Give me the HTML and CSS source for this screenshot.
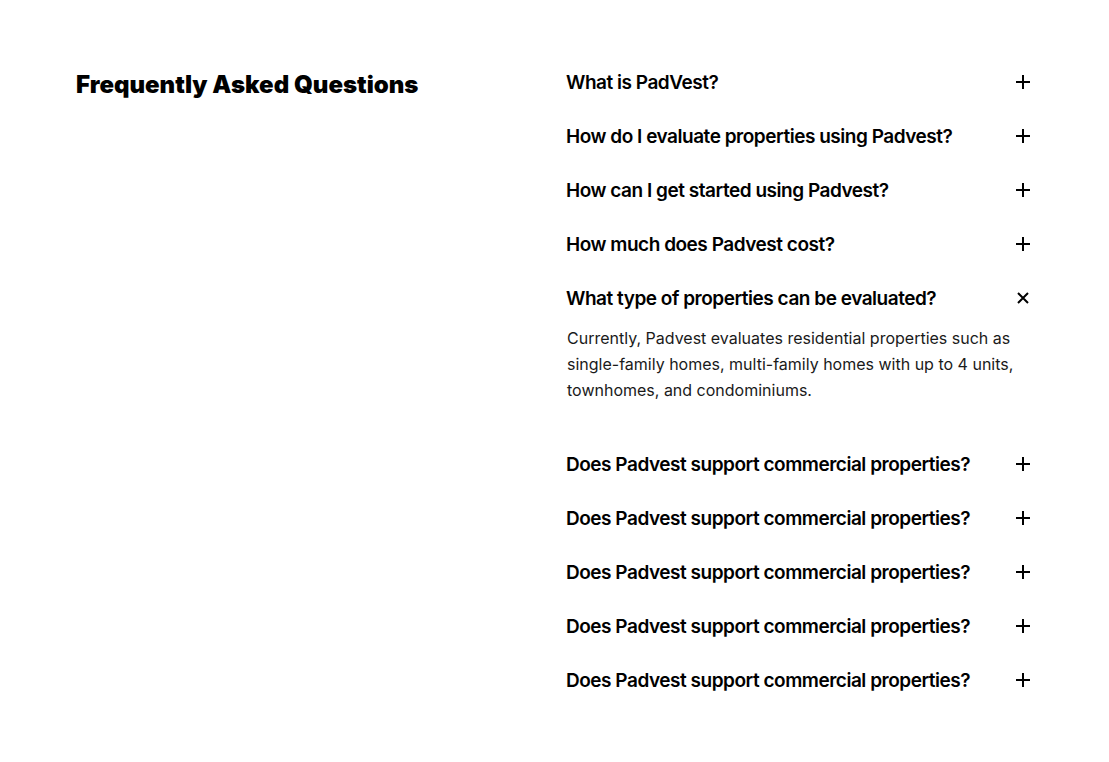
FILE: index.html
```html
<!DOCTYPE html>
<html lang="en">
<head>
<meta charset="utf-8">
<title>FAQ</title>
<link rel="stylesheet" href="styles.css">
</head>
<body>
<main class="faq">
  <h2 class="faq-title">Frequently Asked Questions</h2>
  <div class="faq-list">
    <div class="faq-item">
      <div class="faq-q"><span>What is PadVest?</span><svg class="icon" viewBox="0 0 16 16"><path d="M8 1v14M1 8h14"/></svg></div>
    </div>
    <div class="faq-item">
      <div class="faq-q"><span>How do I evaluate properties using Padvest?</span><svg class="icon" viewBox="0 0 16 16"><path d="M8 1v14M1 8h14"/></svg></div>
    </div>
    <div class="faq-item">
      <div class="faq-q"><span>How can I get started using Padvest?</span><svg class="icon" viewBox="0 0 16 16"><path d="M8 1v14M1 8h14"/></svg></div>
    </div>
    <div class="faq-item">
      <div class="faq-q"><span>How much does Padvest cost?</span><svg class="icon" viewBox="0 0 16 16"><path d="M8 1v14M1 8h14"/></svg></div>
    </div>
    <div class="faq-item open">
      <div class="faq-q"><span>What type of properties can be evaluated?</span><svg class="icon" viewBox="0 0 16 16"><path d="M3 3l10 10M13 3L3 13"/></svg></div>
      <p class="faq-a">Currently, Padvest evaluates residential properties such as single-family homes, multi-family homes with up to 4 units, townhomes, and condominiums.</p>
    </div>
    <div class="faq-item">
      <div class="faq-q"><span>Does Padvest support commercial properties?</span><svg class="icon" viewBox="0 0 16 16"><path d="M8 1v14M1 8h14"/></svg></div>
    </div>
    <div class="faq-item">
      <div class="faq-q"><span>Does Padvest support commercial properties?</span><svg class="icon" viewBox="0 0 16 16"><path d="M8 1v14M1 8h14"/></svg></div>
    </div>
    <div class="faq-item">
      <div class="faq-q"><span>Does Padvest support commercial properties?</span><svg class="icon" viewBox="0 0 16 16"><path d="M8 1v14M1 8h14"/></svg></div>
    </div>
    <div class="faq-item">
      <div class="faq-q"><span>Does Padvest support commercial properties?</span><svg class="icon" viewBox="0 0 16 16"><path d="M8 1v14M1 8h14"/></svg></div>
    </div>
    <div class="faq-item">
      <div class="faq-q"><span>Does Padvest support commercial properties?</span><svg class="icon" viewBox="0 0 16 16"><path d="M8 1v14M1 8h14"/></svg></div>
    </div>
  </div>
</main>
</body>
</html>
```
FILE: styles.css
```css
* { box-sizing: border-box; }
html, body { margin: 0; padding: 0; background: #fff; }
body { font-family: Inter, "Noto Sans", sans-serif; color: #000; }

.faq {
  display: grid;
  grid-template-columns: 490px 464px;
  padding: 55px 76px;
}

.faq-title {
  margin: 0;
  font-size: 24px;
  font-weight: 900;
  line-height: 60px;
  letter-spacing: 0;
  color: #000;
}

.faq-list { display: flex; flex-direction: column; }

.faq-q {
  display: flex;
  align-items: center;
  justify-content: space-between;
  height: 54px;
  font-size: 19px;
  font-weight: 600;
  letter-spacing: -0.025em;
  color: #000;
}

.icon {
  width: 16px;
  height: 16px;
  margin-right: -1px;
  fill: none;
  stroke: #000;
  stroke-width: 2;
}

.faq-a {
  margin: 0;
  padding: 0 0 34px 1px;
  font-size: 16px;
  line-height: 26px;
  color: #1a1a1a;
}
```
